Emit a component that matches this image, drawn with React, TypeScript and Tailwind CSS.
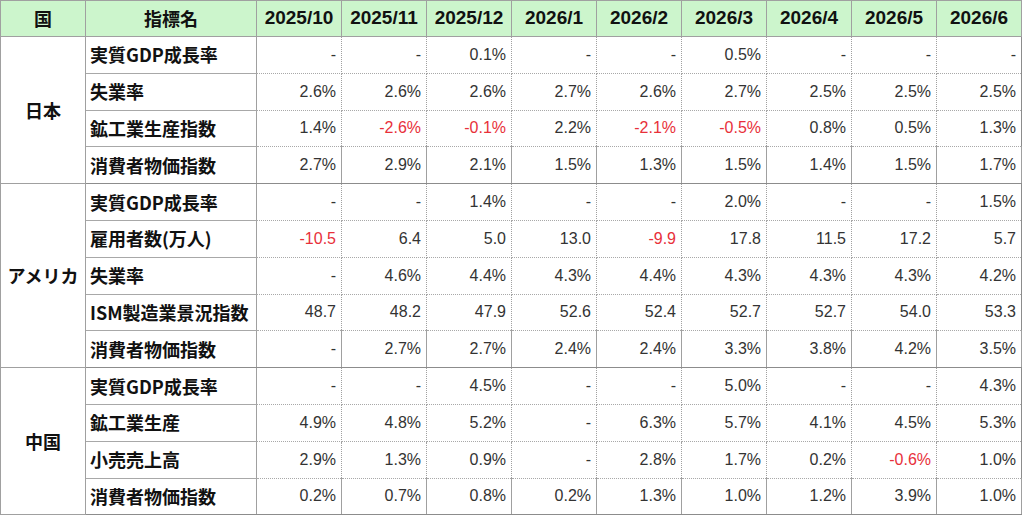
const months = ['2025/10', '2025/11', '2025/12', '2026/1', '2026/2', '2026/3', '2026/4', '2026/5', '2026/6'];

type Row = { label: string; values: string[] };
type Group = { country: string; rows: Row[] };

const groups: Group[] = [
  {
    country: '日本',
    rows: [
      { label: '実質GDP成長率', values: ['-', '-', '0.1%', '-', '-', '0.5%', '-', '-', '-'] },
      { label: '失業率', values: ['2.6%', '2.6%', '2.6%', '2.7%', '2.6%', '2.7%', '2.5%', '2.5%', '2.5%'] },
      { label: '鉱工業生産指数', values: ['1.4%', '-2.6%', '-0.1%', '2.2%', '-2.1%', '-0.5%', '0.8%', '0.5%', '1.3%'] },
      { label: '消費者物価指数', values: ['2.7%', '2.9%', '2.1%', '1.5%', '1.3%', '1.5%', '1.4%', '1.5%', '1.7%'] },
    ],
  },
  {
    country: 'アメリカ',
    rows: [
      { label: '実質GDP成長率', values: ['-', '-', '1.4%', '-', '-', '2.0%', '-', '-', '1.5%'] },
      { label: '雇用者数(万人)', values: ['-10.5', '6.4', '5.0', '13.0', '-9.9', '17.8', '11.5', '17.2', '5.7'] },
      { label: '失業率', values: ['-', '4.6%', '4.4%', '4.3%', '4.4%', '4.3%', '4.3%', '4.3%', '4.2%'] },
      { label: 'ISM製造業景況指数', values: ['48.7', '48.2', '47.9', '52.6', '52.4', '52.7', '52.7', '54.0', '53.3'] },
      { label: '消費者物価指数', values: ['-', '2.7%', '2.7%', '2.4%', '2.4%', '3.3%', '3.8%', '4.2%', '3.5%'] },
    ],
  },
  {
    country: '中国',
    rows: [
      { label: '実質GDP成長率', values: ['-', '-', '4.5%', '-', '-', '5.0%', '-', '-', '4.3%'] },
      { label: '鉱工業生産', values: ['4.9%', '4.8%', '5.2%', '-', '6.3%', '5.7%', '4.1%', '4.5%', '5.3%'] },
      { label: '小売売上高', values: ['2.9%', '1.3%', '0.9%', '-', '2.8%', '1.7%', '0.2%', '-0.6%', '1.0%'] },
      { label: '消費者物価指数', values: ['0.2%', '0.7%', '0.8%', '0.2%', '1.3%', '1.0%', '1.2%', '3.9%', '1.0%'] },
    ],
  },
];

const jp = "font-['Noto_Sans_CJK_JP','Noto_Sans',sans-serif]";
const num = "font-['Liberation_Sans',Arial,sans-serif]";

export default function App() {
  return (
    <div className="w-[1024px] h-[518px] bg-white overflow-hidden">
      <table className="w-[1022px] table-fixed border-collapse border border-[#8c8c8c]">
        <colgroup>
          <col className="w-[85px]" />
          <col className="w-[171px]" />
          {months.map((m) => (
            <col key={m} className="w-[85px]" />
          ))}
        </colgroup>
        <thead>
          <tr className="h-[36px] bg-[#ccf5cc]">
            <th className={`border border-[#a0a0a0] text-[18px] font-bold text-[#111] ${jp}`}>国</th>
            <th className={`border border-[#a0a0a0] text-[18px] font-bold text-[#111] ${jp}`}>指標名</th>
            {months.map((m) => (
              <th key={m} className={`border border-[#a0a0a0] text-[19px] font-bold text-[#111] ${num}`}>
                {m}
              </th>
            ))}
          </tr>
        </thead>
        <tbody>
          {groups.map((g) =>
            g.rows.map((r, i) => {
              const last = i === g.rows.length - 1;
              const rowBorder = last
                ? 'border-b border-b-[#8c8c8c] border-solid'
                : 'border-b border-b-[#a8a8a8] border-dotted';
              return (
                <tr key={g.country + r.label} className="h-[36.8px]">
                  {i === 0 && (
                    <td
                      rowSpan={g.rows.length}
                      className={`border border-[#a0a0a0] text-center align-middle text-[18px] font-bold text-[#111] whitespace-nowrap ${jp}`}
                    >
                      {g.country}
                    </td>
                  )}
                  <td
                    className={`border-x border-x-[#a0a0a0] border-solid ${rowBorder} pl-[4px] text-[18px] font-bold text-[#111] whitespace-nowrap ${jp}`}
                  >
                    {r.label}
                  </td>
                  {r.values.map((v, j) => {
                    const neg = v.startsWith('-') && v.length > 1;
                    return (
                      <td
                        key={j}
                        className={`border-x border-x-[#a0a0a0] ${rowBorder} pr-[5px] text-right text-[16px] ${num} ${
                          neg ? 'text-[#e8303a]' : 'text-[#333]'
                        }`}
                      >
                        {v}
                      </td>
                    );
                  })}
                </tr>
              );
            })
          )}
        </tbody>
      </table>
    </div>
  );
}
